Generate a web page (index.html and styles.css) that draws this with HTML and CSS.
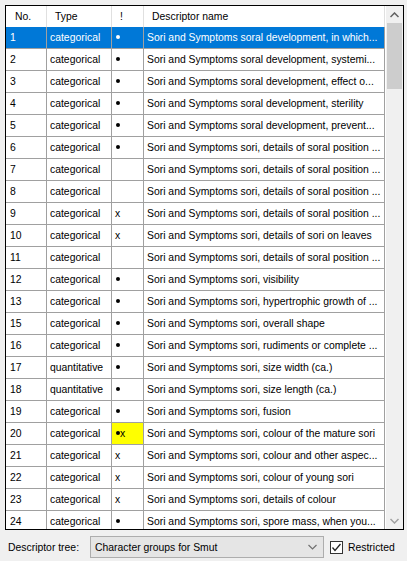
FILE: index.html
```html
<!DOCTYPE html>
<html>
<head>
<meta charset="utf-8">
<link rel="stylesheet" href="styles.css">
</head>
<body>
<div class="grid">
  <div class="view">
    <table class="tbl">
      <colgroup>
        <col class="c1"><col class="c2"><col class="c3"><col class="c4">
      </colgroup>
      <thead>
        <tr><th>No.</th><th>Type</th><th>!</th><th>Descriptor name</th></tr>
      </thead>
      <tbody>
        <tr class="sel"><td>1</td><td>categorical</td><td><span class="dot"></span></td><td>Sori and Symptoms soral development, in which...</td></tr>
        <tr><td>2</td><td>categorical</td><td><span class="dot"></span></td><td>Sori and Symptoms soral development, systemi...</td></tr>
        <tr><td>3</td><td>categorical</td><td><span class="dot"></span></td><td>Sori and Symptoms soral development, effect o...</td></tr>
        <tr><td>4</td><td>categorical</td><td><span class="dot"></span></td><td>Sori and Symptoms soral development, sterility</td></tr>
        <tr><td>5</td><td>categorical</td><td><span class="dot"></span></td><td>Sori and Symptoms soral development, prevent...</td></tr>
        <tr><td>6</td><td>categorical</td><td><span class="dot"></span></td><td>Sori and Symptoms sori, details of soral position ...</td></tr>
        <tr><td>7</td><td>categorical</td><td></td><td>Sori and Symptoms sori, details of soral position ...</td></tr>
        <tr><td>8</td><td>categorical</td><td></td><td>Sori and Symptoms sori, details of soral position ...</td></tr>
        <tr><td>9</td><td>categorical</td><td>x</td><td>Sori and Symptoms sori, details of soral position ...</td></tr>
        <tr><td>10</td><td>categorical</td><td>x</td><td>Sori and Symptoms sori, details of sori on leaves</td></tr>
        <tr><td>11</td><td>categorical</td><td></td><td>Sori and Symptoms sori, details of soral position ...</td></tr>
        <tr><td>12</td><td>categorical</td><td><span class="dot"></span></td><td>Sori and Symptoms sori, visibility</td></tr>
        <tr><td>13</td><td>categorical</td><td><span class="dot"></span></td><td>Sori and Symptoms sori, hypertrophic growth of ...</td></tr>
        <tr><td>15</td><td>categorical</td><td><span class="dot"></span></td><td>Sori and Symptoms sori, overall shape</td></tr>
        <tr><td>16</td><td>categorical</td><td><span class="dot"></span></td><td>Sori and Symptoms sori, rudiments or complete ...</td></tr>
        <tr><td>17</td><td>quantitative</td><td><span class="dot"></span></td><td>Sori and Symptoms sori, size width (ca.)</td></tr>
        <tr><td>18</td><td>quantitative</td><td><span class="dot"></span></td><td>Sori and Symptoms sori, size length (ca.)</td></tr>
        <tr><td>19</td><td>categorical</td><td><span class="dot"></span></td><td>Sori and Symptoms sori, fusion</td></tr>
        <tr><td>20</td><td>categorical</td><td class="warn"><span class="dot"></span>x</td><td>Sori and Symptoms sori, colour of the mature sori</td></tr>
        <tr><td>21</td><td>categorical</td><td>x</td><td>Sori and Symptoms sori, colour and other aspec...</td></tr>
        <tr><td>22</td><td>categorical</td><td>x</td><td>Sori and Symptoms sori, colour of young sori</td></tr>
        <tr><td>23</td><td>categorical</td><td>x</td><td>Sori and Symptoms sori, details of colour</td></tr>
        <tr><td>24</td><td>categorical</td><td><span class="dot"></span></td><td>Sori and Symptoms sori, spore mass, when you...</td></tr>
      </tbody>
    </table>
  </div>
  <div class="vscroll">
    <div class="sbtn">
      <svg width="9" height="6" viewBox="0 0 9 6"><path d="M0.5 5 L4.5 1 L8.5 5" fill="none" stroke="#606060" stroke-width="1.5"/></svg>
    </div>
    <div class="track"><div class="thumb"></div></div>
    <div class="sbtn">
      <svg width="9" height="6" viewBox="0 0 9 6"><path d="M0.5 1 L4.5 5 L8.5 1" fill="none" stroke="#a0a0a0" stroke-width="1.5"/></svg>
    </div>
  </div>
</div>
<div class="footer">
  <span class="label">Descriptor tree:</span>
  <div class="combo">
    <span class="combo-text">Character groups for Smut</span>
    <svg class="chev" width="9" height="6" viewBox="0 0 9 6"><path d="M0.5 1 L4.5 5 L8.5 1" fill="none" stroke="#707070" stroke-width="1.2"/></svg>
  </div>
  <label class="check">
    <span class="box">
      <svg width="11" height="11" viewBox="0 0 11 11"><path d="M1.5 5.5 L4 8.5 L9.5 2" fill="none" stroke="#222" stroke-width="1.3"/></svg>
    </span>
    <span class="check-text">Restricted</span>
  </label>
</div>
</body>
</html>
```
FILE: styles.css
```css
html, body {
  margin: 0;
  padding: 0;
}
body {
  width: 407px;
  height: 561px;
  background: #f0f0f0;
  font-family: "Liberation Sans", Arial, sans-serif;
  font-size: 10.4px;
  color: #000;
  padding: 5px 4px 0 5px;
  box-sizing: border-box;
  overflow: hidden;
}
.grid {
  display: flex;
  width: 399px;
  height: 525px;
  border: 1px solid #000;
  box-sizing: border-box;
  background: #fff;
}
.view {
  width: 379px;
  height: 523px;
  overflow: hidden;
}
.tbl {
  table-layout: fixed;
  border-collapse: separate;
  border-spacing: 0;
  width: 379px;
}
.c1 { width: 41px; }
.c2 { width: 65px; }
.c3 { width: 32px; }
.c4 { width: 241px; }
.tbl th {
  height: 21px;
  padding: 0 0 0 8px;
  text-align: left;
  font-weight: normal;
  border-right: 1px solid #e0e0e0;
  white-space: nowrap;
  overflow: hidden;
  box-sizing: border-box;
}
.tbl th:first-child { padding-left: 9px; }
.tbl td {
  height: 22px;
  padding: 0 0 0 3px;
  border-right: 1px solid #a0a0a0;
  border-bottom: 1px solid #a0a0a0;
  white-space: nowrap;
  overflow: hidden;
  box-sizing: border-box;
  line-height: 21px;
}
.tbl td:first-child { padding-left: 4px; }
.tbl tr.sel td {
  background: #0078d7;
  color: #fff;
}
.tbl td.warn { background: #ffff00; }
.dot {
  display: inline-block;
  width: 4px;
  height: 4px;
  border-radius: 50%;
  background: currentColor;
  margin-left: 1px;
  vertical-align: middle;
  position: relative;
  top: -1px;
}
.vscroll {
  width: 17px;
  height: 523px;
  margin-left: 1px;
  display: flex;
  flex-direction: column;
  background: #f0f0f0;
}
.sbtn {
  height: 17px;
  display: flex;
  align-items: center;
  justify-content: center;
}
.track {
  flex: 1;
  padding: 0 1px;
}
.thumb {
  height: 66px;
  background: #cdcdcd;
}
.footer {
  display: flex;
  align-items: center;
  margin-top: 6px;
  height: 22px;
}
.label {
  margin-left: 3px;
  width: 82px;
}
.combo {
  width: 234px;
  height: 22px;
  box-sizing: border-box;
  border: 1px solid #adadad;
  background: #e5e5e5;
  display: flex;
  align-items: center;
  padding-left: 4px;
  padding-right: 6px;
}
.combo-text { flex: 1; }
.check {
  display: flex;
  align-items: center;
  margin-left: 6px;
}
.box {
  width: 13px;
  height: 13px;
  box-sizing: border-box;
  border: 1px solid #333;
  background: #fff;
  display: flex;
  align-items: center;
  justify-content: center;
}
.check-text { margin-left: 5px; }
```
